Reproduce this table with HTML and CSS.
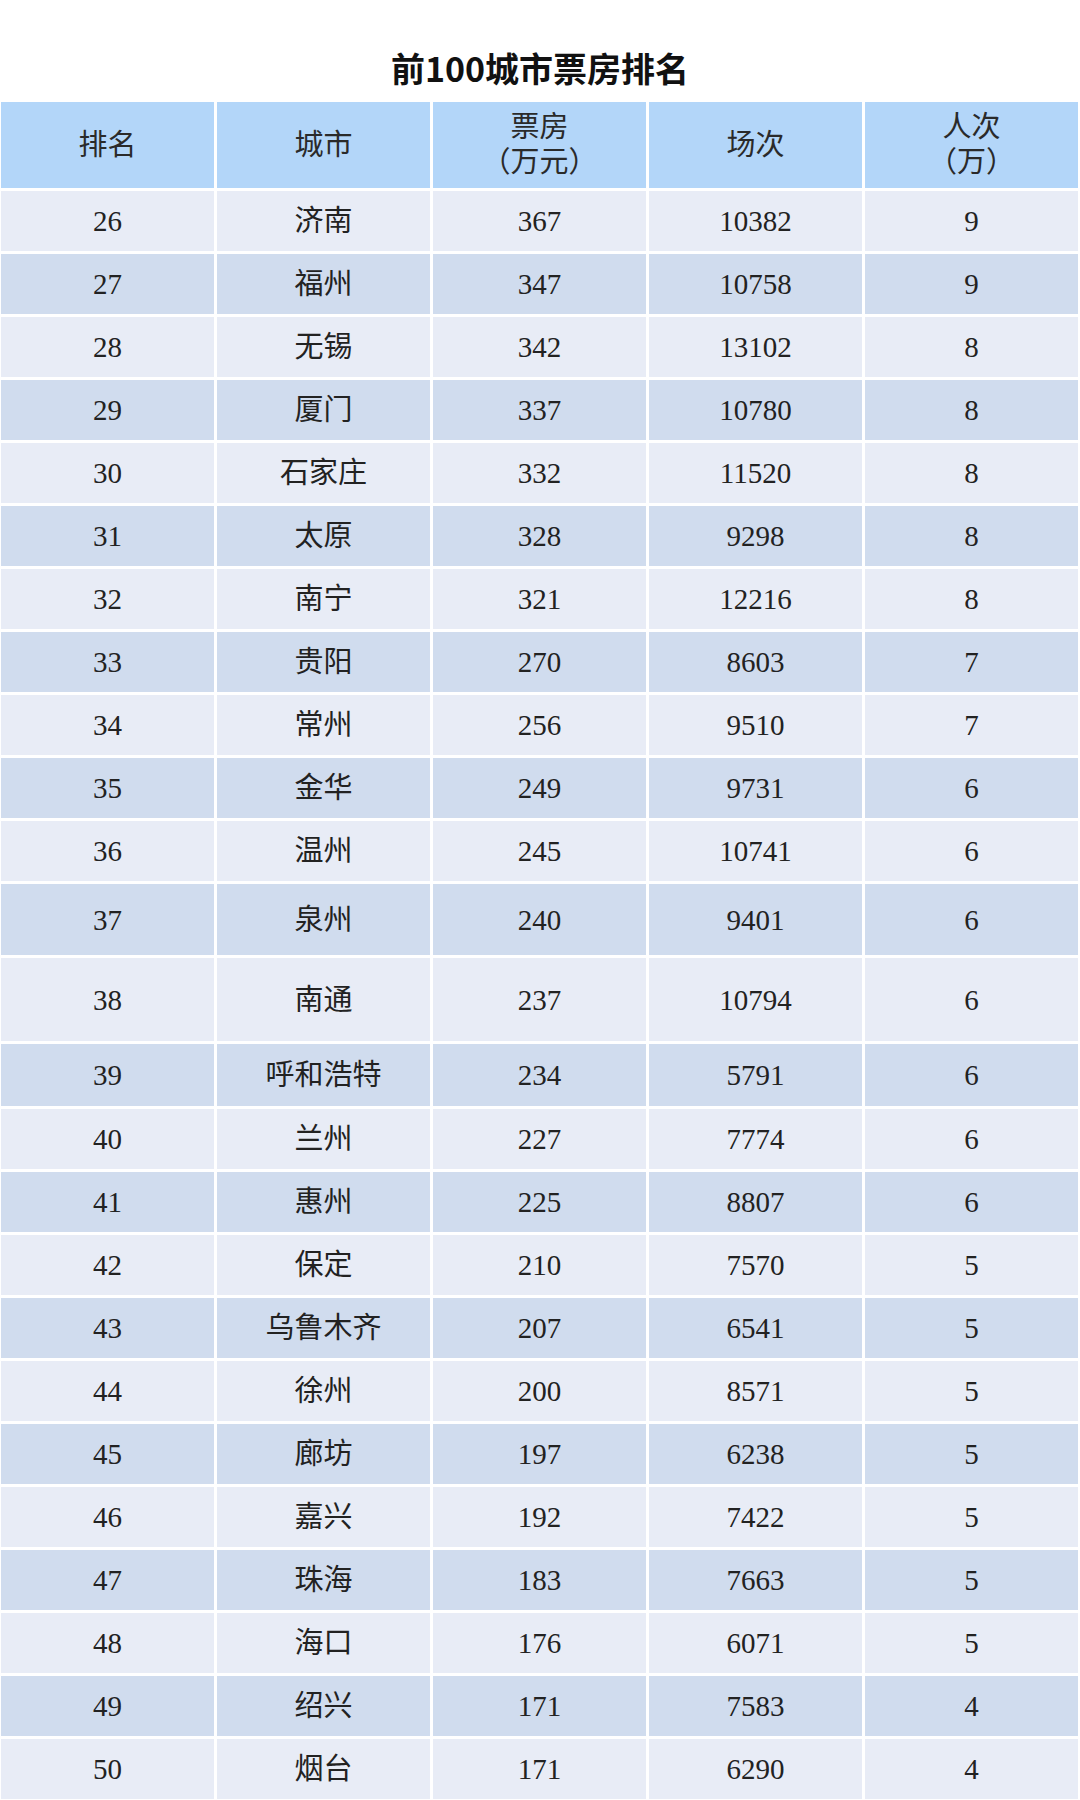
FILE: index.html
```html
<!DOCTYPE html>
<html lang="zh-CN">
<head>
<meta charset="utf-8">
<title>前100城市票房排名</title>
<link rel="stylesheet" href="styles.css">
</head>
<body>
<div class="page">
  <h1 class="title">前100城市票房排名</h1>
  <div class="table">
    <div class="row head">
      <div class="cell">排名</div>
      <div class="cell">城市</div>
      <div class="cell two">票房<br>（万元）</div>
      <div class="cell">场次</div>
      <div class="cell two">人次<br>（万）</div>
    </div>
    <div class="row light"><div class="cell">26</div><div class="cell">济南</div><div class="cell">367</div><div class="cell">10382</div><div class="cell">9</div></div>
    <div class="row dark"><div class="cell">27</div><div class="cell">福州</div><div class="cell">347</div><div class="cell">10758</div><div class="cell">9</div></div>
    <div class="row light"><div class="cell">28</div><div class="cell">无锡</div><div class="cell">342</div><div class="cell">13102</div><div class="cell">8</div></div>
    <div class="row dark"><div class="cell">29</div><div class="cell">厦门</div><div class="cell">337</div><div class="cell">10780</div><div class="cell">8</div></div>
    <div class="row light"><div class="cell">30</div><div class="cell">石家庄</div><div class="cell">332</div><div class="cell">11520</div><div class="cell">8</div></div>
    <div class="row dark"><div class="cell">31</div><div class="cell">太原</div><div class="cell">328</div><div class="cell">9298</div><div class="cell">8</div></div>
    <div class="row light"><div class="cell">32</div><div class="cell">南宁</div><div class="cell">321</div><div class="cell">12216</div><div class="cell">8</div></div>
    <div class="row dark"><div class="cell">33</div><div class="cell">贵阳</div><div class="cell">270</div><div class="cell">8603</div><div class="cell">7</div></div>
    <div class="row light"><div class="cell">34</div><div class="cell">常州</div><div class="cell">256</div><div class="cell">9510</div><div class="cell">7</div></div>
    <div class="row dark"><div class="cell">35</div><div class="cell">金华</div><div class="cell">249</div><div class="cell">9731</div><div class="cell">6</div></div>
    <div class="row light"><div class="cell">36</div><div class="cell">温州</div><div class="cell">245</div><div class="cell">10741</div><div class="cell">6</div></div>
    <div class="row dark h71"><div class="cell">37</div><div class="cell">泉州</div><div class="cell">240</div><div class="cell">9401</div><div class="cell">6</div></div>
    <div class="row light h83"><div class="cell">38</div><div class="cell">南通</div><div class="cell">237</div><div class="cell">10794</div><div class="cell">6</div></div>
    <div class="row dark h62"><div class="cell">39</div><div class="cell">呼和浩特</div><div class="cell">234</div><div class="cell">5791</div><div class="cell">6</div></div>
    <div class="row light"><div class="cell">40</div><div class="cell">兰州</div><div class="cell">227</div><div class="cell">7774</div><div class="cell">6</div></div>
    <div class="row dark"><div class="cell">41</div><div class="cell">惠州</div><div class="cell">225</div><div class="cell">8807</div><div class="cell">6</div></div>
    <div class="row light"><div class="cell">42</div><div class="cell">保定</div><div class="cell">210</div><div class="cell">7570</div><div class="cell">5</div></div>
    <div class="row dark"><div class="cell">43</div><div class="cell">乌鲁木齐</div><div class="cell">207</div><div class="cell">6541</div><div class="cell">5</div></div>
    <div class="row light"><div class="cell">44</div><div class="cell">徐州</div><div class="cell">200</div><div class="cell">8571</div><div class="cell">5</div></div>
    <div class="row dark"><div class="cell">45</div><div class="cell">廊坊</div><div class="cell">197</div><div class="cell">6238</div><div class="cell">5</div></div>
    <div class="row light"><div class="cell">46</div><div class="cell">嘉兴</div><div class="cell">192</div><div class="cell">7422</div><div class="cell">5</div></div>
    <div class="row dark"><div class="cell">47</div><div class="cell">珠海</div><div class="cell">183</div><div class="cell">7663</div><div class="cell">5</div></div>
    <div class="row light"><div class="cell">48</div><div class="cell">海口</div><div class="cell">176</div><div class="cell">6071</div><div class="cell">5</div></div>
    <div class="row dark"><div class="cell">49</div><div class="cell">绍兴</div><div class="cell">171</div><div class="cell">7583</div><div class="cell">4</div></div>
    <div class="row light"><div class="cell">50</div><div class="cell">烟台</div><div class="cell">171</div><div class="cell">6290</div><div class="cell">4</div></div>
  </div>
</div>
</body>
</html>
```

FILE: styles.css
```css
html, body {
  margin: 0;
  padding: 0;
  background: #ffffff;
}

.page {
  width: 1080px;
  height: 1800px;
  overflow: hidden;
}

.title {
  margin: 0;
  padding-top: 46px;
  height: 56px;
  line-height: 44px;
  text-align: center;
  font-family: "Noto Sans CJK SC", "Noto Sans", sans-serif;
  font-weight: 700;
  font-size: 34px;
  color: #111111;
}

.table {
  display: flex;
  flex-direction: column;
  gap: 3px;
  width: 1077px;
  margin-left: 1px;
}

.row {
  display: grid;
  grid-template-columns: repeat(5, 1fr);
  column-gap: 3px;
  height: 60px;
}

.row.head { height: 86px; }
.row.h71 { height: 71px; }
.row.h83 { height: 83px; }
.row.h62 { height: 62px; }

.cell {
  display: flex;
  align-items: center;
  justify-content: center;
  text-align: center;
  font-family: "Liberation Serif", "Noto Sans CJK SC", serif;
  font-size: 29px;
  line-height: 32px;
  color: #222222;
}

.head .cell {
  background: #b3d6f9;
  color: #2a2a2a;
  line-height: 35px;
}

.light .cell { background: #e8ecf6; }
.dark .cell { background: #d0dcee; }
```
